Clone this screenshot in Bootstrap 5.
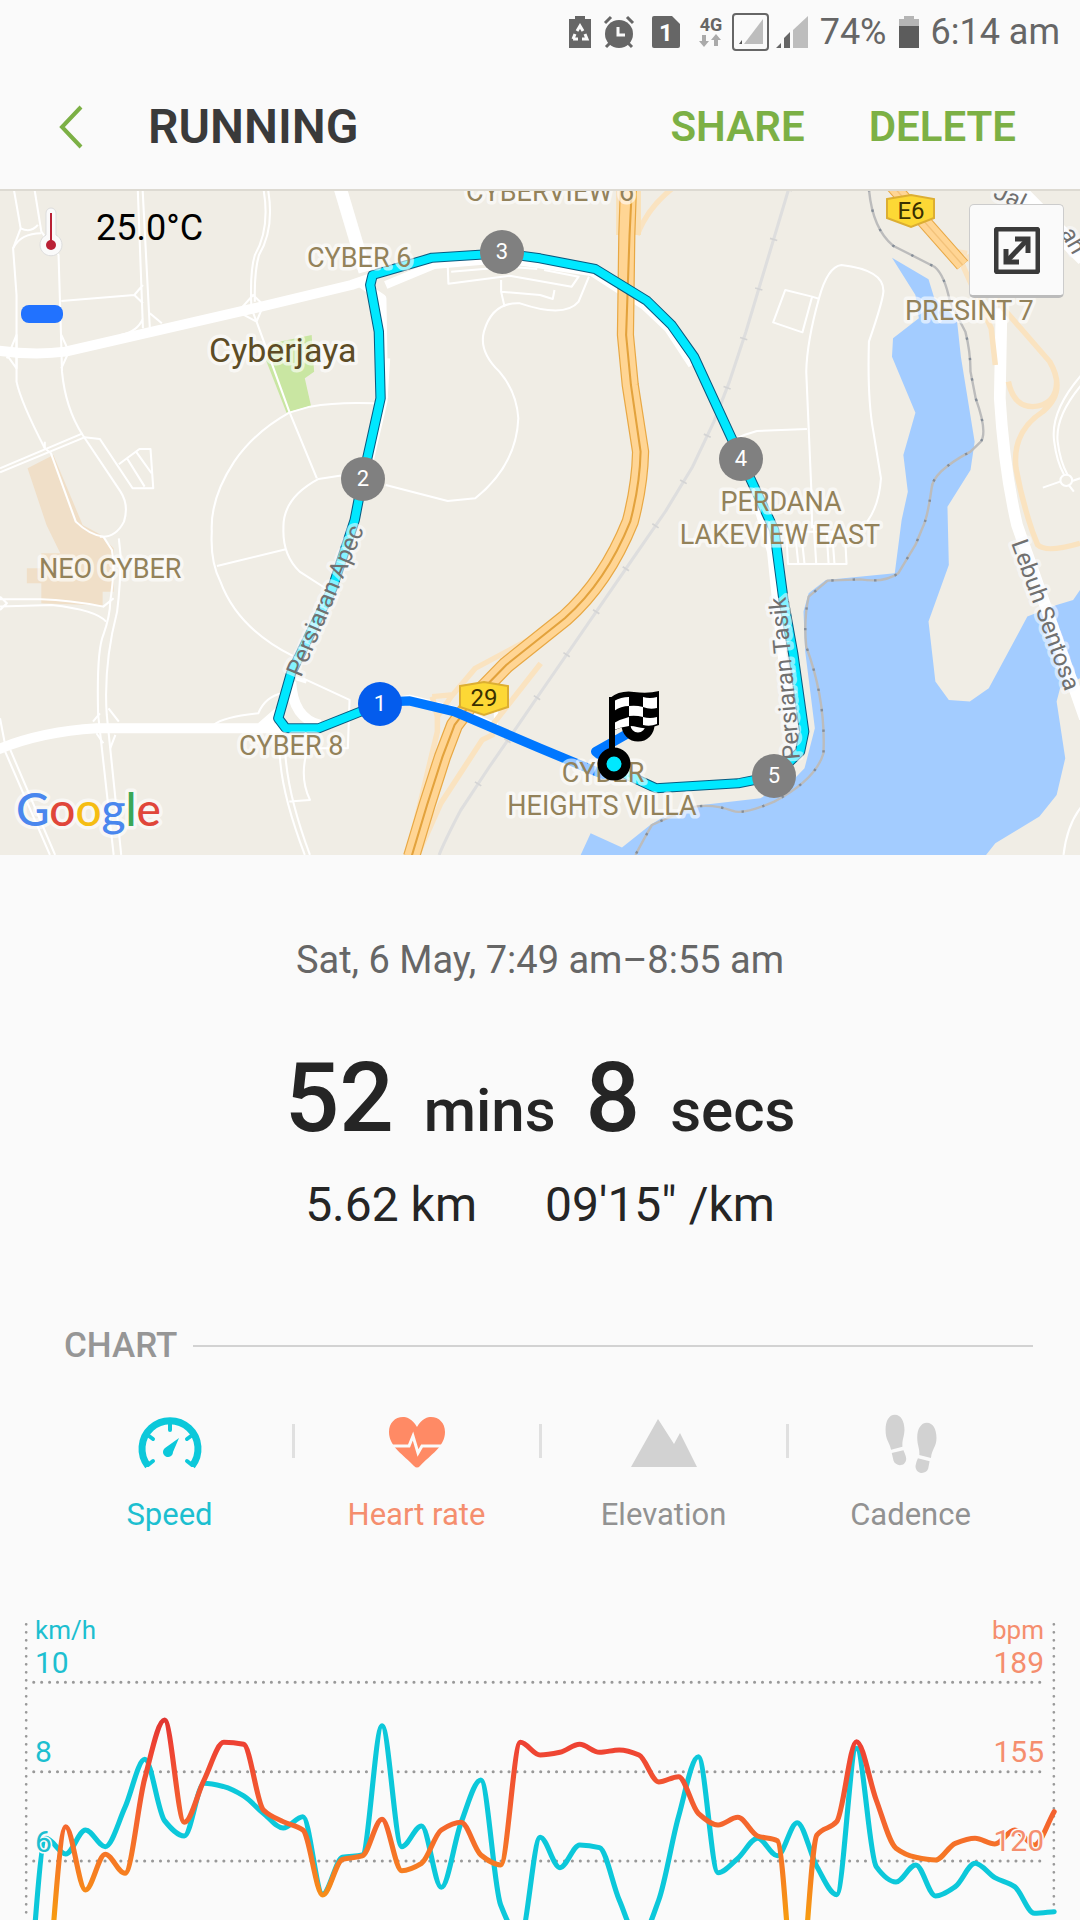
<!DOCTYPE html>
<html lang="en">
<head>
<meta charset="utf-8">
<meta name="viewport" content="width=device-width, initial-scale=1">
<title>Running</title>
<link href="https://cdn.jsdelivr.net/npm/bootstrap@5.3.0/dist/css/bootstrap.min.css" rel="stylesheet">
<style>
  body { background: #fafafa; color: #252525; font-family: Roboto, "Open Sans", sans-serif; overflow-x: hidden; }
  svg { display: block; flex: none; }
  svg text { font-family: Roboto, "Open Sans", sans-serif; }
  .status-bar { height: 64px; padding: 0 20px 0 0; color: #666; font-size: 36px; line-height: 64px; }
  .status-bar svg { overflow: visible; }
  .status-bar .g12 { margin-left: 12px; }
  .status-bar .g17 { margin-left: 17px; }
  .status-bar .g7 { margin-left: 7px; }
  .app-bar { height: 125px; padding: 0 64px 0 58px; }
  .app-bar .title { margin: 0 0 0 64px; color: #3a3a3a; font-size: 48px; font-weight: 600; line-height: 56px; }
  .app-bar .actions { gap: 64px; }
  .app-bar .action { color: #7cb045; font-size: 42px; font-weight: 600; line-height: 56px; }
  .map-box { border-top: 2px solid #dddad2; background: #f0ede5; }
  .map-box > svg { width: 100%; height: auto; }
  .weather { padding: 14px 0 0 36px; gap: 32px; color: #000; font-size: 36px; line-height: 46px; }
  .legend-pill { width: 42px; height: 18px; border-radius: 8px; background: #2172ff; margin: 114px 0 0 21px; }
  .expand { width: 95px; height: 94px; margin: 13px 16px 0 0; background: #fafafa; border: 1px solid #ccc; border-bottom: 3px solid #bbb; border-radius: 5px; }
  .halo text { paint-order: stroke; stroke: rgba(255,255,255,.6); stroke-width: 7px; stroke-linejoin: round; fill: #93825a; font-size: 27px; }
  .halo .street { fill: #707070; font-size: 24px; stroke: rgba(250,252,255,.55); }
  .halo .town { fill: #5d4c25; font-size: 34px; }
  .halo .google { font-family: Lato, sans-serif; font-size: 46px; font-weight: 500; }
  .pins text { fill: #fff; font-size: 22px; text-anchor: middle; }
  .summary { padding-top: 79px; }
  .when { color: #666; font-size: 38px; line-height: 52px; }
  .duration { margin-top: 62px; gap: 30px; line-height: 100px; font-size: 60px; font-weight: 500; }
  .duration b { font-size: 96px; font-weight: 500; }
  .pace { margin-top: 12px; gap: 68px; font-size: 48px; line-height: 64px; }
  .section-head { margin-top: 85px; padding: 0 47px 0 64px; gap: 16px; }
  .section-head h2 { margin: 0; color: #969696; font-size: 35px; font-weight: 500; line-height: 48px; }
  .section-head hr { margin: 0; border-top: 2px solid #c8c8c8; opacity: .8; }
  .metrics { margin-top: 44px; padding: 0 46px; }
  .metric { color: #929292; font-size: 31px; line-height: 44px; position: relative; }
  .metric + .metric::before { content: ""; position: absolute; left: -1px; top: 10px; width: 3px; height: 34px; background: #e0e0e0; }
  .metric svg { margin: 0 auto 19px; }
  .metric.speed { color: #1dbfd0; }
  .metric.heart { color: #f58e6e; }
  .chart { margin-top: 63px; height: 320px; overflow: hidden; }
  .chart > svg { width: 100%; height: auto; }
  .axis text { font-size: 30px; paint-order: stroke; stroke: #fafafa; stroke-width: 3px; }
  .axis .unit { font-size: 26px; }
</style>
</head>
<body>

<div class="status-bar d-flex align-items-center justify-content-end">
  <svg width="22" height="32" viewBox="0 0 22 32"><path fill="#666" d="M6 0h10v3h6v29H0V3h6z"/><path d="M8 15l3-5 3 5M16 18l2 5h-5M4 23l2-5m-2 5h5" fill="none" stroke="#fafafa" stroke-width="3"/></svg>
  <svg class="g12" width="32" height="32" viewBox="0 0 32 32"><circle cx="16" cy="18" r="14" fill="#666"/><path d="M2 7l6-6M30 7l-6-6M7 27l-4 4M25 27l4 4" stroke="#666" stroke-width="3"/><path d="M15 11v8h7" fill="none" stroke="#fafafa" stroke-width="3"/></svg>
  <svg class="g17" width="28" height="32" viewBox="0 0 28 32"><path fill="#666" d="M2 0h18l8 8v22q0 2-2 2H2q-2 0-2-2V2q0-2 2-2z"/><text x="14" y="25" text-anchor="middle" font-size="24" font-weight="700" fill="#fff">1</text></svg>
  <svg class="g17" width="28" height="40" viewBox="0 -3 28 40"><text x="14" y="16" text-anchor="middle" font-size="18" font-weight="700" fill="#666">4G</text><path fill="#aaa" d="M5 20h4v6h3l-5 6-5-6h3zM17 31v-6h-3l5-6 5 6h-3v6z"/></svg>
  <svg class="g7" width="37" height="38" viewBox="0 0 37 38"><rect x="1" y="1" width="35" height="36" rx="3" fill="none" stroke="#666" stroke-width="2"/><path fill="#bdbdbd" d="M31 6v25H12z"/><path fill="#555" d="M7 31h3v-4z"/></svg>
  <svg class="g7" width="32" height="32" viewBox="0 0 32 32"><path fill="#bdbdbd" d="M32 0v32H17V14z"/><path fill="#666" d="M0 32h5v-5zM8 32h6V16l-6 6z"/></svg>
  <span class="g12">74%</span>
  <svg class="g12 me-2" width="20" height="32" viewBox="0 0 20 32"><path fill="#b5b5b5" d="M5 0h10v3h5v8H0V3h5z"/><path fill="#5c5c5c" d="M0 10h20v22H0z"/></svg>
  <span class="ms-1">6:14 am</span>
</div>

<header class="app-bar d-flex align-items-center">
  <button class="btn p-0 border-0" type="button" aria-label="Back">
    <svg width="26" height="44" viewBox="0 0 26 44"><path d="M23 2L4 22l19 20" fill="none" stroke="#7cb045" stroke-width="4"/></svg>
  </button>
  <h1 class="title">RUNNING</h1>
  <div class="actions d-flex ms-auto">
    <button class="action btn p-0 border-0" type="button">SHARE</button>
    <button class="action btn p-0 border-0" type="button">DELETE</button>
  </div>
</header>

<section class="map-box position-relative overflow-hidden">
  <svg viewBox="0 2 1080 664" role="img" aria-label="Route map">
    <g transform="translate(0 -4) scale(.3444 .3333)" fill="none" stroke-linejoin="round">
      <!-- land use -->
      <path fill="#f0dfc8" d="M80 850L155 810L240 1020L290 1048L330 1090V1220H298V1262L120 1255V1195H78V1150H120V1105H175L135 1020Z"/>
      <path fill="#c9e6a2" d="M790 475L905 450L912 560L885 580L903 662L832 683L770 520Z"/>
      <path fill="#a3ccff" transform="translate(1568 0)" d="M1022 218L1128 283L1145 340L1210 400L1222 515L1262 770L1250 855L1183 965L1187 1140L1128 1310L1148 1490L1187 1545L1248 1550L1303 1510L1415 1295L1500 1260L1548 1245L1568 1215V1480L1510 1510L1500 1550L1525 1720L1500 1830L1450 1895L1322 1975L1295 2010H118L147 1945L238 1988L320 1920L360 1895L470 1860L640 1840L740 1780L768 1750L798 1630L770 1400L765 1280L780 1225L830 1185L1030 1165L1050 1005L1068 920L1055 810L1090 683L1022 515L1025 460L1100 400L1090 330Z"/>
      <!-- minor roads -->
      <g stroke="#fff" stroke-width="6">
        <path d="M40 12L60 130L38 190L48 330V590Q60 650 130 790L148 805L220 1010Q260 1050 300 1055L325 1095Q335 1150 320 1250Q320 1290 300 1350Q280 1400 285 1590L330 2010"/>
        <path d="M100 12L120 140L170 210L178 480L180 560Q190 670 240 750L350 920Q375 960 360 1010Q335 1060 290 1055M345 1060L350 1110Q350 1200 340 1280Q300 1440 310 1590L352 2010"/>
        <path d="M60 130Q90 145 110 120M120 145Q60 145 38 190M400 12L415 430M414 12L435 430M178 348L390 330L415 300M390 330L415 355M415 400Q400 440 350 450M435 385L470 415"/>
        <path d="M765 12Q785 130 740 210Q725 260 730 370L745 410L840 680L920 880M778 12Q798 130 752 210Q738 260 740 350M700 370L735 330L765 360L745 410L700 385"/>
        <path d="M0 850L240 745M0 862L245 757L290 762L385 910H445L437 792H405L345 838M370 822L420 905M395 800L440 865M20 520L48 450V550L20 510M178 450L200 500L178 550M130 790V770"/>
        <path d="M1090 655Q980 650 900 665L840 683Q740 740 680 830Q610 940 615 1040Q610 1130 640 1190Q690 1330 850 1413M1000 870L925 882Q820 940 823 1030Q820 1110 870 1160L945 1210M630 1143L830 1093"/>
        <path d="M1120 900L1300 948L1380 940Q1500 840 1505 700Q1500 620 1450 560Q1390 500 1405 440Q1430 350 1510 355Q1640 400 1680 350L1710 275"/>
        <path d="M1300 240L1302 296L1480 272L1660 305L1680 275L1580 255M1310 260L1480 245L1560 252M1455 285V320L1568 330L1605 342L1610 315M1455 320L1465 365"/>
        <path d="M0 1243H120Q200 1245 300 1265L330 1240M0 1265L150 1260Q280 1275 308 1310M0 1235L20 1255L0 1275"/>
        <path d="M15 1700L145 2010M30 1695L160 2010M0 1600L15 1680M620 1620Q650 1595 750 1585Q770 1535 820 1525M270 1610L290 1585M345 1610L315 1570M280 1645L300 1675M335 1650L320 1690"/>
        <path d="M812 1700Q815 1820 885 2010M828 1700Q835 1830 900 2010M890 1705Q870 1780 900 1845L840 1850M880 1480L1015 1545L1010 1690H900"/>
      </g>
      <g stroke="#fff" stroke-width="6" transform="translate(1568 0)">
        <path d="M570 760Q590 750 630 738L775 732M790 335L712 315L677 412L762 442L790 335L812 342M950 1010Q985 960 990 880L968 740Q950 640 955 470Q995 350 997 320Q1000 255 875 240Q835 245 810 340Q775 470 773 560L788 920L790 1030"/>
        <path d="M718 1137H890L885 1040M720 1137L715 1040M750 1137L740 1040M768 1137L758 1040M802 1137L795 1020M838 1137L832 1040M855 1137L848 1040M715 1040H885M1572 570Q1480 680 1493 770Q1500 830 1522 870M1580 590Q1495 690 1503 770Q1510 830 1532 870M1510 890L1460 908M1545 888L1568 880M1535 900L1550 920M1520 2010Q1530 1920 1572 1865"/>
        <circle cx="1528" cy="886" r="17"/>
      </g>
      <!-- railway -->
      <path d="M2290 12L2253 140L2166 440L2118 590L2073 710L2011 845L1933 978L1848 1105L1568 1525L1505 1620L1420 1747L1337 1877Q1290 1970 1275 2010" stroke="#dedede" stroke-width="9"/>
      <path d="M2290 12L2253 140L2166 440L2118 590L2073 710L2011 845L1933 978L1848 1105L1568 1525L1505 1620L1420 1747L1337 1877" stroke="#d4d4d4" stroke-width="22" stroke-dasharray="5 150"/>
      <!-- trunk roads -->
      <g stroke="#fff">
        <path d="M-5 497Q100 512 190 500L430 443L730 372L1020 300L1090 275" stroke-width="30"/>
        <path d="M985 0L1060 260" stroke-width="38"/>
        <path d="M1040 290L1110 340L1115 640M1120 300L1260 240L1460 222L1720 262L1870 362L1940 430L2010 540" stroke-width="24"/>
        <path d="M1120 520L1112 650L1060 880M2200 960L2240 1100L2290 1600" stroke-width="26"/>
        <path d="M-5 1693Q120 1640 280 1630H900M760 1625L810 1580M845 1490Q850 1600 930 1620" stroke-width="30"/>
        <path d="M1045 1560L1190 1535L1340 1575L1440 1620V1560M860 1480L890 1490" stroke-width="12"/>
        <path d="M2908 370L2903 640Q2915 850 2953 1020L3150 1600" stroke-width="34"/>
        <path d="M2940 0L3150 220" stroke-width="50"/>
      </g>
      <!-- ramps -->
      <g stroke="#fae3c0" stroke-width="16">
        <path d="M1570 1345L1380 1450L1310 1535L1270 1595L1255 1535M1255 1535L1310 1530M1270 1590V1640L1185 2005M1570 1435L1430 1620V1650L1400 1665L1280 1855L1215 2005M1810 12V150M1950 12Q1880 70 1850 150"/>
        <path transform="translate(1568 0)" d="M1210 200L1240 205M1225 235L1310 430L1322 540M1240 210L1345 370L1480 530Q1530 620 1460 680Q1370 740 1382 850Q1400 950 1430 1040L1445 1080Q1470 1105 1568 1075M1360 590Q1375 665 1430 665Q1500 660 1500 590"/>
      </g>
      <!-- highways -->
      <path d="M1825 0V150" stroke="#fae0b5" stroke-width="72"/>
      <path d="M1825 0L1820 150L1816 450L1830 600L1860 800Q1858 900 1830 1010Q1760 1190 1640 1300L1470 1440L1390 1525L1320 1620L1285 1715L1240 1860L1195 2015" stroke="#e8a844" stroke-width="50"/>
      <path d="M1825 0L1820 150L1816 450L1830 600L1860 800Q1858 900 1830 1010Q1760 1190 1640 1300L1470 1440L1390 1525L1320 1620L1285 1715L1240 1860L1195 2015" stroke="#ffd594" stroke-width="43"/>
      <path d="M1835 0L1828 150L1818 450L1832 600L1860 800Q1858 900 1830 1010Q1760 1190 1640 1300L1470 1440L1390 1525L1320 1620L1285 1715L1240 1860L1195 2015" stroke="#e3a23c" stroke-width="6"/>
      <path d="M2590 0L2795 240" stroke="#e8a844" stroke-width="42"/>
      <path d="M2590 0L2795 240" stroke="#ffd594" stroke-width="36"/>
      <path d="M2590 0L2795 240" stroke="#f3c27a" stroke-width="4"/>
      <!-- district boundary -->
      <g transform="translate(1568 0)" stroke-width="7">
        <path stroke="#bcbcbc" d="M955 12Q965 130 1025 182L1145 245Q1175 270 1190 350L1235 440Q1250 500 1250 560L1265 640Q1300 740 1280 770L1250 800Q1140 860 1137 910Q1125 1000 1110 1030L1090 1080L1040 1165Q1000 1195 930 1183L835 1187L780 1235Q765 1305 773 1385Q830 1545 823 1705Q800 1785 680 1850Q590 1890 560 1878Q500 1855 440 1867L325 1920Q300 1965 277 2010"/>
        <path stroke="#848d98" stroke-dasharray="7 55" d="M955 12Q965 130 1025 182L1145 245Q1175 270 1190 350L1235 440Q1250 500 1250 560L1265 640Q1300 740 1280 770L1250 800Q1140 860 1137 910Q1125 1000 1110 1030L1090 1080L1040 1165Q1000 1195 930 1183L835 1187L780 1235Q765 1305 773 1385Q830 1545 823 1705Q800 1785 680 1850Q590 1890 560 1878Q500 1855 440 1867L325 1920Q300 1965 277 2010"/>
      </g>
      <!-- run track -->
      <path d="M1103 1552L1190 1548L1320 1580L1568 1690L1750 1768L1800 1760L1730 1700L1850 1630" stroke="#0077ff" stroke-width="28"/>
      <path d="M1103 1557L925 1630H830L808 1600L845 1465L965 1210L1030 1005L1053 882L1105 640L1100 440L1075 300L1082 270L1255 218L1460 205L1568 220L1728 252L1878 347L1950 420L2015 515L2152 822L2248 1035L2275 1245L2303 1405L2335 1640L2323 1700L2250 1773L2143 1795L1905 1810L1780 1750" stroke="#075a80" stroke-width="30"/>
      <path d="M1103 1557L925 1630H830L808 1600L845 1465L965 1210L1030 1005L1053 882L1105 640L1100 440L1075 300L1082 270L1255 218L1460 205L1568 220L1728 252L1878 347L1950 420L2015 515L2152 822L2248 1035L2275 1245L2303 1405L2335 1640L2323 1700L2250 1773L2143 1795L1905 1810L1780 1750" stroke="#00e8ff" stroke-width="24"/>
    </g>

    <!-- place and street names -->
    <g class="halo">
      <text x="466" y="12">CYBERVIEW 6</text>
      <text x="307" y="78">CYBER 6</text>
      <text class="town" x="209" y="173">Cyberjaya</text>
      <text x="39" y="389">NEO CYBER</text>
      <text x="239" y="566">CYBER 8</text>
      <text x="781" y="322" text-anchor="middle">PERDANA</text>
      <text x="780" y="355" text-anchor="middle">LAKEVIEW EAST</text>
      <text x="905" y="131">PRESINT 7</text>
      <text x="603" y="593" text-anchor="middle">CYBER</text>
      <text x="602" y="626" text-anchor="middle">HEIGHTS VILLA</text>
      <text class="street" transform="translate(301 489) rotate(-67)">Persiaran Apec</text>
      <text class="street" transform="translate(800 570) rotate(-95)">Persiaran Tasik</text>
      <text class="street" transform="translate(1011 354) rotate(70)">Lebuh Sentosa</text>
      <text class="street" transform="translate(992 8) rotate(26)">Jal</text>
      <text class="street" transform="translate(1060 44) rotate(60)">ah</text>
      <text class="google" x="16" y="637"><tspan fill="#4a87ee">G</tspan><tspan fill="#e0463a">o</tspan><tspan fill="#f5bd13">o</tspan><tspan fill="#4a87ee">g</tspan><tspan fill="#3aa757">l</tspan><tspan fill="#e0463a">e</tspan></text>
    </g>

    <!-- route shields -->
    <g font-size="24" text-anchor="middle" fill="#3a3000">
      <path d="M460 497l24-4 24 4v21l-24 8-24-8z" fill="#fdd835" stroke="#dcae32" stroke-width="2"/>
      <text x="484" y="517">29</text>
      <path d="M887 10l24-4 23 4v19l-23 9-24-9z" fill="#fdd835" stroke="#dcae32" stroke-width="2"/>
      <text x="911" y="30">E6</text>
    </g>

    <!-- kilometre pins -->
    <g class="pins">
      <circle cx="363" cy="290" r="22" fill="#808080"/><text x="363" y="297">2</text>
      <circle cx="502" cy="63" r="22" fill="#808080"/><text x="502" y="70">3</text>
      <circle cx="741" cy="270" r="22" fill="#808080"/><text x="741" y="277">4</text>
      <circle cx="774" cy="587" r="22" fill="#808080"/><text x="774" y="594">5</text>
      <circle cx="380" cy="515" r="22" fill="#045ced"/><text x="380" y="522">1</text>
    </g>

    <!-- start ring and finish flag -->
    <circle cx="638" cy="536" r="12" fill="#fff" stroke="#000" stroke-width="9"/>
    <path d="M610 509q10-8 24-6t25-1v34q-12 5-22 2t-24 4v20h-4z" fill="#000"/>
    <g fill="#fff">
      <path d="M614 512q7-4 15-4v9q-8 0-15 5zM643 508q7 2 14 0v11q-7 2-14-1z"/>
      <path d="M629 517q7-1 14 1v10q-7-2-14-1zM614 534q7-4 15-6v9q-8 1-15 4z"/>
      <path d="M643 528q7 2 14 0v7q-7 3-14 1z"/>
    </g>
    <circle cx="614" cy="575" r="12" fill="#00e8ff" stroke="#000" stroke-width="9"/>
    <path d="M612 508v54" stroke="#000" stroke-width="6"/>
  </svg>

  <div class="weather d-flex align-items-start position-absolute top-0 start-0">
    <svg width="28" height="52" viewBox="0 0 28 52"><path d="M10 30V8a5 5 0 0 1 10 0v22a11 11 0 1 1-10 0z" fill="#fafafa" stroke="#ddd"/><path d="M15 8v32" stroke="#b92035" stroke-width="2"/><circle cx="15" cy="40" r="5" fill="#b92035"/></svg>
    <span>25.0°C</span>
  </div>
  <div class="legend-pill position-absolute top-0 start-0"></div>
  <button class="expand position-absolute top-0 end-0 d-flex align-items-center justify-content-center p-0" type="button" aria-label="Expand map">
    <svg width="46" height="47" viewBox="0 0 46 47"><rect x="2" y="2" width="42" height="43" rx="2" fill="none" stroke="#3a3a3a" stroke-width="5"/><path d="M14 33L32 14" stroke="#3a3a3a" stroke-width="5"/><path d="M21 12h13V26M12 22v13h13" fill="none" stroke="#3a3a3a" stroke-width="5"/></svg>
  </button>
</section>

<main>
  <section class="summary text-center">
    <div class="when">Sat, 6 May, 7:49 am–8:55 am</div>
    <div class="duration d-flex justify-content-center align-items-baseline"><b>52</b><span>mins</span><b>8</b><span>secs</span></div>
    <div class="pace d-flex justify-content-center"><span>5.62 km</span><span>09'15″ /km</span></div>
  </section>

  <div class="section-head d-flex align-items-center">
    <h2>CHART</h2>
    <hr class="flex-grow-1">
  </div>

  <div class="metrics row row-cols-4 g-0">
    <button class="metric speed col btn p-0 border-0" type="button">
      <svg width="66" height="60" viewBox="0 0 66 60" fill="none" stroke="#0cc8da"><path d="M11 52A28 28 0 1 1 55 52" stroke-width="7"/><path d="M33 8v8M12 22l4 3M54 22l-4 3M11 51l5-4M55 51l-5-4" stroke-width="4" stroke-linecap="round"/><path d="M42 24L28 34a5 5 0 1 0 8 4z" fill="#0cc8da" stroke="none"/></svg>
      Speed
    </button>
    <button class="metric heart col btn p-0 border-0" type="button">
      <svg width="66" height="60" viewBox="0 0 66 60"><path fill="#ff8a65" d="M33 13C28 4 22 3 19 3C11 3 5 9 5 18C5 33 20 41 30 52Q33 55 36 52C46 41 61 33 61 18C61 9 55 3 47 3C44 3 38 4 33 13z"/><path d="M7 32H25L29 22L34 39L38 32H59" fill="none" stroke="#fafafa" stroke-width="3"/></svg>
      Heart rate
    </button>
    <button class="metric col btn p-0 border-0" type="button">
      <svg width="66" height="60" viewBox="0 0 66 60"><path fill="#d2d2d2" d="M0 53L27 5L43 30L49 19L66 53z"/></svg>
      Elevation
    </button>
    <button class="metric col btn p-0 border-0" type="button">
      <svg width="66" height="60" viewBox="0 0 66 60"><g fill="#d2d2d2" transform="scale(.344 .333) translate(-978 -310)"><path d="M1027 312C1045 312 1055 332 1055 358C1054 380 1048 385 1049 408L1016 417C1012 395 1000 390 1000 358C1000 330 1010 312 1027 312zM1018 427L1052 419Q1060 438 1060 445C1058 470 1028 468 1023 450zM1120 336C1138 336 1148 355 1148 382C1148 410 1134 415 1132 442L1098 433C1100 415 1092 405 1092 380C1092 355 1103 336 1120 336zM1094 443L1128 452L1124 474C1118 493 1087 492 1087 466Q1088 456 1094 443z"/></g></svg>
      Cadence
    </button>
  </div>

  <section class="chart">
    <svg viewBox="0 0 1080 320" role="img" aria-label="Speed and heart rate chart">
      <defs>
        <linearGradient id="heat" gradientUnits="userSpaceOnUse" x1="0" y1="340" x2="0" y2="960">
          <stop offset="0" stop-color="#dc3230"/><stop offset=".15" stop-color="#ee4233"/><stop offset=".5" stop-color="#f4632f"/><stop offset=".75" stop-color="#f67c22"/><stop offset="1" stop-color="#f79c10"/>
        </linearGradient>
      </defs>
      <g transform="scale(.3444 .3333)" fill="none" stroke-linecap="round" stroke-linejoin="round">
        <path d="M98 247H3034M98 515H3034M98 783H3034" stroke="#999" stroke-width="9" stroke-dasharray="0 23"/>
        <path d="M76 73V960M3060 73V960" stroke="#999" stroke-width="8" stroke-dasharray="0 24"/>
        <path id="speedLine" stroke="#0cc8da" stroke-width="15"/>
        <path id="heartLine" stroke="url(#heat)" stroke-width="15"/>
      </g>
      <g class="axis" fill="#1dbfd0">
        <text class="unit" x="35" y="39">km/h</text>
        <text x="35" y="73">10</text><text x="35" y="162">8</text><text x="35" y="252">6</text><text x="35" y="341">4</text>
      </g>
      <g class="axis" fill="#f58e6e" text-anchor="end">
        <text class="unit" x="1044" y="39">bpm</text>
        <text x="1044" y="73">189</text><text x="1044" y="162">155</text><text x="1044" y="251">120</text><text x="1044" y="341">86</text>
      </g>
    </svg>
  </section>
</main>

<script src="https://cdn.jsdelivr.net/npm/bootstrap@5.3.0/dist/js/bootstrap.bundle.min.js"></script>
<script>
  // Samples are evenly spaced; each is joined to the next by a monotone cubic.
  const speed = [1300,715,762,690,740,622,478,662,708,550,560,588,640,684,650,882,772,765,377,740,678,862,668,540,915,1010,712,803,735,743,900,1020,900,650,470,818,775,715,767,668,800,884,445,800,846,795,888,860,790,833,860,940,935];
  const heart = [1900,1250,680,870,763,820,535,360,667,540,427,433,630,665,690,885,778,768,658,812,790,690,667,765,795,427,465,457,433,457,450,465,546,530,640,675,652,708,722,1250,705,665,425,600,745,772,780,730,715,732,690,735,635];
  function smooth(values) {
    const step = 57.4, n = values.length;
    const slope = values.slice(1).map((v, i) => v - values[i]);
    const tangent = values.map((v, i) => {
      if (i === 0) return slope[0];
      if (i === n - 1) return slope[n - 2];
      const a = slope[i - 1], b = slope[i];
      return a * b <= 0 ? 0 : 2 * a * b / (a + b);
    });
    let d = `M76 ${values[0]}`;
    for (let i = 1; i < n; i++) {
      const x0 = 76 + step * (i - 1), x1 = x0 + step;
      d += `C${x0 + step / 3} ${values[i - 1] + tangent[i - 1] / 3} ${x1 - step / 3} ${values[i] - tangent[i] / 3} ${x1} ${values[i]}`;
    }
    return d;
  }
  document.getElementById('speedLine').setAttribute('d', smooth(speed));
  document.getElementById('heartLine').setAttribute('d', smooth(heart));
</script>
</body>
</html>
